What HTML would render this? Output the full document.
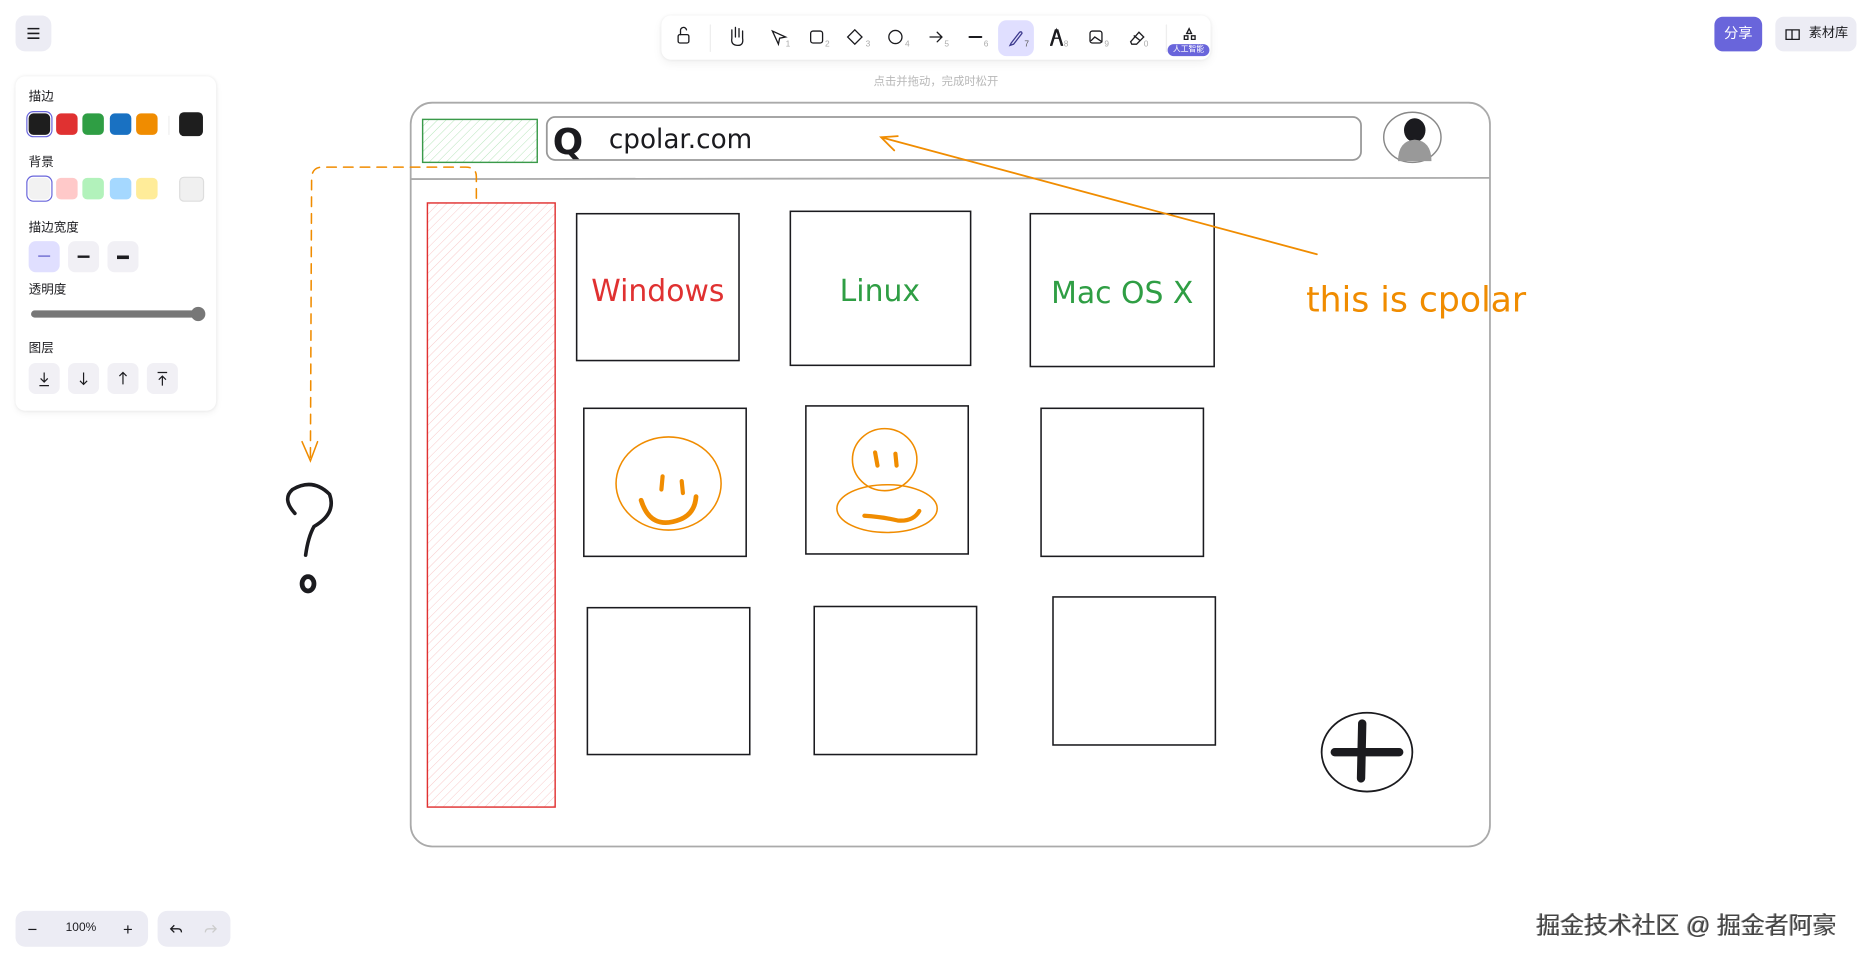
<!DOCTYPE html>
<html><head><meta charset="utf-8"><style>
html,body{margin:0;padding:0;background:#fff;overflow:hidden;width:1872px;height:962px}
#w{position:absolute;left:0;top:0;width:1568px;height:806px;transform:scale(1.19388);transform-origin:0 0;font-family:"Liberation Sans","Noto Sans CJK SC",sans-serif;color:#1b1b1f}
.abs{position:absolute}
.btn{position:absolute;background:#ececf4;border-radius:8px}
.panel{position:absolute;left:13px;top:64px;width:168px;height:280px;background:#fff;border-radius:8px;box-shadow:0 0 3px rgba(0,0,0,.07),0 2px 6px rgba(0,0,0,.05)}
.lbl{position:absolute;left:11px;font-size:10.5px;color:#1b1b1f}
.sw{position:absolute;width:18px;height:18px;border-radius:4px}
.sq{position:absolute;width:26px;height:26px;border-radius:6px;background:#f1f0f5}
.tb{position:absolute;left:554px;top:13px;width:460px;height:37px;background:#fff;border-radius:8px;box-shadow:0 0 3px rgba(0,0,0,.07),0 3px 8px rgba(0,0,0,.06)}
.num{position:absolute;font-size:7px;color:#aaa}
</style></head><body><div id="w">
<svg class="abs" style="left:0;top:0" width="1568" height="806" viewBox="0 0 1568 806">
<defs>
<pattern id="hg" width="5" height="5" patternUnits="userSpaceOnUse" patternTransform="rotate(45)"><line x1="0" y1="0" x2="0" y2="5" stroke="#b4e4b8" stroke-width="0.8"/></pattern>
<pattern id="hr" width="5" height="5" patternUnits="userSpaceOnUse" patternTransform="rotate(45)"><line x1="0" y1="0" x2="0" y2="5" stroke="#f9c8c8" stroke-width="0.8"/></pattern>
</defs>
<rect x="344" y="86" width="904" height="623" rx="18" fill="none" stroke="#aaa" stroke-width="1.5"/>
<line x1="344" y1="150" x2="1248" y2="149" stroke="#aaa" stroke-width="1.5"/>
<rect x="354" y="100" width="96" height="36" fill="url(#hg)" stroke="#3a9a4a" stroke-width="1.2"/>
<rect x="458" y="98" width="682" height="36" rx="7" fill="none" stroke="#999" stroke-width="1.5"/>
<text x="463" y="129" font-family="DejaVu Sans" font-weight="bold" font-size="30" fill="#1b1b1f">Q</text>
<text x="510" y="124" font-family="DejaVu Sans" font-size="22" fill="#1b1b1f">cpolar.com</text>
<ellipse cx="1183" cy="115" rx="24" ry="21" fill="none" stroke="#888" stroke-width="1.2"/>
<ellipse cx="1185" cy="109" rx="9" ry="10" fill="#1b1b1f"/>
<path d="M1171 135 Q1171 118 1185 117 Q1199 118 1199 135 Z" fill="#999"/>
<rect x="358" y="170" width="107" height="506" fill="url(#hr)" stroke="#e03131" stroke-width="1.2"/>
<g fill="none" stroke="#1b1b1f" stroke-width="1.3">
<rect x="483" y="179" width="136" height="123"/>
<rect x="662" y="177" width="151" height="129"/>
<rect x="863" y="179" width="154" height="128"/>
<rect x="489" y="342" width="136" height="124"/>
<rect x="675" y="340" width="136" height="124"/>
<rect x="872" y="342" width="136" height="124"/>
<rect x="492" y="509" width="136" height="123"/>
<rect x="682" y="508" width="136" height="124"/>
<rect x="882" y="500" width="136" height="124"/>
</g>
<text x="551" y="252" text-anchor="middle" font-family="DejaVu Sans" font-size="25" fill="#e03131">Windows</text>
<text x="737" y="252" text-anchor="middle" font-family="DejaVu Sans" font-size="25" fill="#2f9e44">Linux</text>
<text x="940" y="254" text-anchor="middle" font-family="DejaVu Sans" font-size="25" fill="#2f9e44">Mac OS X</text>
<g fill="none" stroke="#f08c00" stroke-linecap="round">
<ellipse cx="560" cy="405" rx="44" ry="39" stroke-width="1.3"/>
<path d="M555 399 L554 410 M571 403 L572 413" stroke-width="3.5"/>
<path d="M537 419 Q545 445 570 435 Q582 430 583 416" stroke-width="4"/>
<ellipse cx="741" cy="385" rx="27" ry="26" stroke-width="1.3"/>
<path d="M733 379 L735 390 M750 380 L751 390" stroke-width="3.5"/>
<ellipse cx="743" cy="426" rx="42" ry="20" stroke-width="1.3"/>
<path d="M724 432 Q740 433 752 436 Q765 437 770 428" stroke-width="3.5"/>
<path d="M399 166 L399 148 Q399 140 390 140 L270 140 Q261 140 261 150 L260 385" stroke-width="1.3" stroke-dasharray="8 6"/>
<path d="M253 370 L260 386 L266 370" stroke-width="1.3"/>
<path d="M1103 213 L738 115 M752 114 L738 115 L749 126" stroke-width="1.5"/>
</g>
<text x="1094" y="261" font-family="DejaVu Sans" font-size="29" fill="#f08c00">this is cpolar</text>
<g fill="none" stroke="#1b1b1f" stroke-linecap="round">
<path d="M247 430 Q236 418 245 410 Q262 400 276 414 Q282 430 263 441 Q258 450 256 465" stroke-width="3"/>
<ellipse cx="258" cy="489" rx="5" ry="6" stroke-width="4"/>
<ellipse cx="1145" cy="630" rx="38" ry="33" stroke-width="1.5"/>
<path d="M1118 630 L1172 630 M1141 606 L1140 652" stroke-width="7"/>
</g>
</svg>

<div class="btn" style="left:13px;top:13px;width:30px;height:30px"><svg width="30" height="30"><path d="M10 11H20M10 15H20M10 19H20" stroke="#1b1b1f" stroke-width="1.3"/></svg></div>

<div class="tb">
<svg class="abs" style="left:0;top:0" width="460" height="37" fill="none" stroke="#1b1b1f" stroke-width="1.1" stroke-linecap="round">
<rect x="14" y="16" width="9" height="7" rx="1.5"/><path d="M16 16V13a2.5 2.5 0 0 1 5 -1"/>
<line x1="41" y1="8" x2="41" y2="30" stroke="#eee"/>
<path d="M59 19 V12 M62 18 V10 M65 18 V11 M68 19 V13 M59 19 Q58 25 64 25 Q69 25 68 19"/>
<path d="M93 13 L98 24 L99 19 L104 18 Z"/>
<rect x="125" y="13" width="10" height="10" rx="2"/>
<path d="M162 12 L168 18 L162 24 L156 18 Z"/>
<circle cx="196" cy="18" r="5.5"/>
<path d="M225 18 H235 M231 14 L235 18 L231 22"/>
<path d="M258 18 H268" stroke-width="1.6"/>
<rect x="282" y="4" width="30" height="30" rx="7" fill="#e0dfff" stroke="none"/>
<path d="M293 23 L300 14 Q302 13 302 15 L295 24 L292 25 Z" stroke="#3d3a8f"/>
<path d="M327 25 L331 12 L335 25 M329 19 H333 M326 25 L330 12 M336 25 L332 12"/>
<rect x="359" y="13" width="10" height="10" rx="2"/><path d="M360 21 L363 18 L369 22"/>
<path d="M393 22 L400 14 L404 18 L398 24 H394 Z M396 17 L401 21"/>
<line x1="423" y1="8" x2="423" y2="30" stroke="#eee"/>
<path d="M442 11 L444 15 L440 15 Z M438 17 h3 v3 h-3z M444 17 h3 v3 h-3z"/>
</svg>
<span class="num" style="left:104px;top:21px">1</span><span class="num" style="left:137px;top:21px">2</span><span class="num" style="left:171px;top:21px">3</span><span class="num" style="left:204px;top:21px">4</span><span class="num" style="left:237px;top:21px">5</span><span class="num" style="left:270px;top:21px">6</span><span class="num" style="left:304px;top:21px;color:#555">7</span><span class="num" style="left:337px;top:21px">8</span><span class="num" style="left:371px;top:21px">9</span><span class="num" style="left:404px;top:21px">0</span>
<div class="abs" style="left:424px;top:24px;width:35px;height:10px;background:#6965db;border-radius:5px;color:#fff;font-size:6.5px;line-height:10px;text-align:center">人工智能</div>
</div>
<div class="abs" style="left:700px;top:60px;width:168px;text-align:center;font-size:9.5px;color:#b8b8b8">点击并拖动，完成时松开</div>

<div class="abs" style="left:1436px;top:14px;width:40px;height:29px;background:#6965db;border-radius:7px;color:#fff;font-size:12px;line-height:29px;text-align:center">分享</div>
<div class="abs" style="left:1487px;top:14px;width:68px;height:29px;background:#ececf4;border-radius:7px;font-size:11px;line-height:29px">
<svg class="abs" style="left:8px;top:9px" width="14" height="12" fill="none" stroke="#1b1b1f" stroke-width="1.1"><path d="M1 2H6V10H1Z M6 2H12V10H6Z"/></svg><span class="abs" style="left:28px;top:0">素材库</span></div>

<div class="panel">
<div class="lbl" style="top:9px">描边</div>
<div class="sw" style="left:11px;top:31px;background:#1e1e1e;box-shadow:0 0 0 1px #fff,0 0 0 2px #6965db"></div>
<div class="sw" style="left:34px;top:31px;background:#e03131"></div>
<div class="sw" style="left:56px;top:31px;background:#2f9e44"></div>
<div class="sw" style="left:79px;top:31px;background:#1971c2"></div>
<div class="sw" style="left:101px;top:31px;background:#f08c00"></div>
<div class="abs" style="left:128px;top:33px;width:1px;height:16px;background:#eee"></div>
<div class="sw" style="left:137px;top:30px;width:20px;height:20px;background:#1e1e1e"></div>
<div class="lbl" style="top:64px">背景</div>
<div class="sw" style="left:11px;top:85px;background:#f2f2f2;box-shadow:0 0 0 1px #fff,0 0 0 2px #6965db"></div>
<div class="sw" style="left:34px;top:85px;background:#ffc9c9"></div>
<div class="sw" style="left:56px;top:85px;background:#b2f2bb"></div>
<div class="sw" style="left:79px;top:85px;background:#a5d8ff"></div>
<div class="sw" style="left:101px;top:85px;background:#ffec99"></div>
<div class="sw" style="left:137px;top:84px;width:19px;height:19px;background:#f0f0f0;border:1px solid #ddd"></div>
<div class="lbl" style="top:119px">描边宽度</div>
<div class="sq" style="left:11px;top:138px;background:#e0dfff"><div class="abs" style="left:8px;top:12px;width:10px;height:1.3px;background:#5b57c8"></div></div>
<div class="sq" style="left:44px;top:138px"><div class="abs" style="left:8px;top:12px;width:10px;height:2px;background:#1b1b1f"></div></div>
<div class="sq" style="left:77px;top:138px"><div class="abs" style="left:8px;top:11.5px;width:10px;height:3px;background:#1b1b1f"></div></div>
<div class="lbl" style="top:171px">透明度</div>
<div class="abs" style="left:13px;top:196px;width:144px;height:6px;border-radius:3px;background:#777"></div>
<div class="abs" style="left:147px;top:193px;width:12px;height:12px;border-radius:6px;background:#777"></div>
<div class="lbl" style="top:220px">图层</div>
<div class="sq" style="left:11px;top:240px"></div><div class="sq" style="left:44px;top:240px"></div><div class="sq" style="left:77px;top:240px"></div><div class="sq" style="left:110px;top:240px"></div>
<svg class="abs" style="left:11px;top:240px" width="130" height="26" fill="none" stroke="#1b1b1f" stroke-width="1"><path d="M13 8V16 M10 13L13 16L16 13 M9 19H17"/><path d="M46 8V18 M43 15L46 18L49 15"/><path d="M79 18V8 M76 11L79 8L82 11"/><path d="M112 19V11 M109 14L112 11L115 14 M108 8H116"/></svg>
</div>

<div class="abs" style="left:13px;top:763px;width:111px;height:30px;background:#ececf4;border-radius:8px;font-size:10px;line-height:30px">
<span class="abs" style="left:10px;font-size:14px">−</span><span class="abs" style="left:42px">100%</span><span class="abs" style="left:90px;font-size:14px">+</span></div>
<div class="abs" style="left:132px;top:763px;width:61px;height:30px;background:#ececf4;border-radius:8px">
<svg width="61" height="30" fill="none" stroke-width="1.1"><path d="M14 12 L11 15 L14 18 M11 15 H17 Q20 15 20 18" stroke="#1b1b1f"/><path d="M46 12 L49 15 L46 18 M49 15 H43 Q40 15 40 18" stroke="#ccc"/></svg></div>
<div class="abs" style="left:1287px;top:759px;font-size:20px;color:#444;text-shadow:1px 1px 0 #fff,-1px 0 0 #999;white-space:nowrap">掘金技术社区 @ 掘金者阿豪</div>
</div></body></html>
